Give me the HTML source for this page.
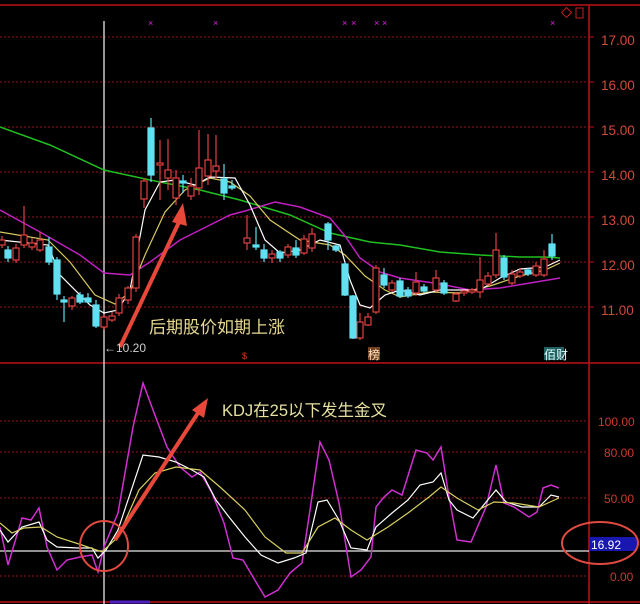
<!DOCTYPE html>
<html><head><meta charset="utf-8"><style>
html,body{margin:0;padding:0;background:#000;width:640px;height:604px;overflow:hidden}
svg{display:block}
text{font-family:"Liberation Sans","Noto Sans CJK SC",sans-serif}
</style></head><body>
<svg width="640" height="604" viewBox="0 0 640 604" xmlns="http://www.w3.org/2000/svg">
<rect width="640" height="604" fill="#000"/>
<line x1="0" y1="5" x2="640" y2="5" stroke="#c0101a" stroke-width="1.5"/>
<line x1="589" y1="5" x2="589" y2="604" stroke="#c0101a" stroke-width="1.5"/>
<line x1="0" y1="363" x2="640" y2="363" stroke="#c0101a" stroke-width="1.5"/>
<line x1="0" y1="602" x2="640" y2="602" stroke="#c0101a" stroke-width="1.5"/>
<line x1="110" y1="602" x2="150" y2="602" stroke="#5020c0" stroke-width="3"/>
<g stroke="#8a1a1a" stroke-width="1" stroke-dasharray="2,2">
<line x1="0" y1="37" x2="589" y2="37"/><line x1="0" y1="82" x2="589" y2="82"/>
<line x1="0" y1="127" x2="589" y2="127"/><line x1="0" y1="172" x2="589" y2="172"/>
<line x1="0" y1="217" x2="589" y2="217"/><line x1="0" y1="262" x2="589" y2="262"/>
<line x1="0" y1="307" x2="589" y2="307"/>
<line x1="0" y1="421" x2="589" y2="421"/><line x1="0" y1="452" x2="589" y2="452"/>
<line x1="0" y1="498" x2="589" y2="498"/><line x1="0" y1="576" x2="589" y2="576"/>
</g>
<g stroke="#c0101a"><line x1="589" y1="37" x2="594" y2="37"/><line x1="589" y1="82" x2="594" y2="82"/><line x1="589" y1="127" x2="594" y2="127"/><line x1="589" y1="172" x2="594" y2="172"/><line x1="589" y1="217" x2="594" y2="217"/><line x1="589" y1="262" x2="594" y2="262"/><line x1="589" y1="307" x2="594" y2="307"/></g>
<g fill="#d04a3a" font-size="13.5">
<text x="601" y="45">17.00</text><text x="601" y="90">16.00</text><text x="601" y="135">15.00</text>
<text x="601" y="180">14.00</text><text x="601" y="225">13.00</text><text x="601" y="270">12.00</text>
<text x="601" y="315">11.00</text>
</g>
<g fill="#c83a30" font-size="12">
<text x="598" y="426">100.00</text><text x="604" y="457">80.00</text><text x="604" y="503">50.00</text><text x="610" y="581">0.00</text>
</g>
<rect x="563" y="9" width="7" height="7" transform="rotate(45 566.5 12.5)" fill="none" stroke="#c02020"/>
<rect x="576" y="8" width="7" height="10" fill="none" stroke="#c02020"/>
<g fill="#e020e0" font-size="9"><text x="148" y="26">×</text><text x="213" y="26">×</text><text x="342" y="26">×</text><text x="351" y="26">×</text><text x="374" y="26">×</text><text x="382" y="26">×</text><text x="550" y="26">×</text></g>
<line x1="104" y1="21" x2="104" y2="604" stroke="#c8c8c8" stroke-width="1.5"/>
<polyline fill="none" stroke="#20c020" stroke-width="1.5" points="0,127 50,145 104,170 150,180 200,190 240,200 290,215 330,233 370,242 400,245 440,252 480,255 520,257 545,257 560,258"/>
<polyline fill="none" stroke="#c020c0" stroke-width="1.5" points="0,210 40,232 80,255 104,273 130,275 150,262 180,240 210,225 230,215 245,211 275,202 300,207 330,218 345,236 360,258 380,272 400,278 440,284 470,290 500,288 530,283 560,278"/>
<polyline fill="none" stroke="#d8c860" stroke-width="1.2" points="0,232 48,240 70,262 95,295 115,304 130,292 145,255 165,212 185,190 210,178 230,182 250,196 270,220 300,240 330,245 345,255 365,276 385,290 400,297 430,292 460,293 490,286 520,276 545,270 560,263"/>
<polyline fill="none" stroke="#ffffff" stroke-width="1.2" points="0,240 48,245 60,275 90,305 104,313 118,310 130,290 145,210 160,182 175,180 195,185 210,177 235,178 250,205 265,240 280,253 300,250 320,240 340,245 350,280 360,305 370,308 385,295 400,290 420,295 440,290 460,290 480,290 500,278 520,269 545,267 560,260"/>
<g stroke="#e04040" fill="#000" stroke-width="1.2">
<line x1="16" y1="244" x2="16" y2="263"/><rect x="13" y="248" width="6" height="12"/>
<line x1="24" y1="206" x2="24" y2="248"/><rect x="21" y="235" width="6" height="10"/>
<line x1="32" y1="238" x2="32" y2="250"/><rect x="29" y="243" width="6" height="4"/>
<line x1="40" y1="232" x2="40" y2="252"/><rect x="37" y="240" width="6" height="10"/>
<line x1="72" y1="296" x2="72" y2="310"/><rect x="69" y="298" width="6" height="8"/>
<line x1="104" y1="314" x2="104" y2="330"/><rect x="101" y="317" width="6" height="10"/>
<line x1="112" y1="312" x2="112" y2="322"/><rect x="109" y="316" width="6" height="4"/>
<line x1="119" y1="294" x2="119" y2="316"/><rect x="116" y="298" width="6" height="15"/>
<line x1="128" y1="286" x2="128" y2="304"/><rect x="125" y="288" width="6" height="12"/>
<line x1="136" y1="234" x2="136" y2="292"/><rect x="133" y="237" width="6" height="51"/>
<line x1="144" y1="178" x2="144" y2="208"/><rect x="141" y="181" width="6" height="18"/>
<line x1="160" y1="140" x2="160" y2="200"/><rect x="157" y="163" width="6" height="2"/>
<line x1="168" y1="139" x2="168" y2="190"/><rect x="165" y="170" width="6" height="8"/>
<line x1="176" y1="170" x2="176" y2="205"/><rect x="173" y="178" width="6" height="20"/>
<line x1="191" y1="178" x2="191" y2="200"/><rect x="188" y="186" width="6" height="10"/>
<line x1="199" y1="130" x2="199" y2="195"/><rect x="196" y="168" width="6" height="20"/>
<line x1="208" y1="134" x2="208" y2="185"/><rect x="205" y="160" width="6" height="16"/>
<line x1="216" y1="135" x2="216" y2="178"/><rect x="213" y="166" width="6" height="5"/>
<line x1="247" y1="215" x2="247" y2="250"/><rect x="244" y="238" width="6" height="5"/>
<line x1="272" y1="250" x2="272" y2="263"/><rect x="269" y="254" width="6" height="4"/>
<line x1="288" y1="244" x2="288" y2="258"/><rect x="285" y="247" width="6" height="8"/>
<line x1="304" y1="235" x2="304" y2="255"/><rect x="301" y="239" width="6" height="14"/>
<line x1="312" y1="228" x2="312" y2="252"/><rect x="309" y="234" width="6" height="14"/>
<line x1="360" y1="313" x2="360" y2="340"/><rect x="357" y="322" width="6" height="16"/>
<line x1="368" y1="313" x2="368" y2="326"/><rect x="365" y="317" width="6" height="8"/>
<line x1="376" y1="265" x2="376" y2="314"/><rect x="373" y="268" width="6" height="44"/>
<line x1="392" y1="280" x2="392" y2="292"/><rect x="389" y="283" width="6" height="7"/>
<line x1="416" y1="272" x2="416" y2="296"/><rect x="413" y="282" width="6" height="11"/>
<line x1="436" y1="270" x2="436" y2="292"/><rect x="433" y="278" width="6" height="12"/>
<line x1="456" y1="292" x2="456" y2="302"/><rect x="453" y="294" width="6" height="7"/>
<line x1="464" y1="290" x2="464" y2="296"/><rect x="461" y="291" width="6" height="2"/>
<line x1="472" y1="288" x2="472" y2="294"/><rect x="469" y="290" width="6" height="2"/>
<line x1="480" y1="257" x2="480" y2="298"/><rect x="477" y="280" width="6" height="12"/>
<line x1="488" y1="272" x2="488" y2="286"/><rect x="485" y="276" width="6" height="8"/>
<line x1="496" y1="233" x2="496" y2="278"/><rect x="493" y="250" width="6" height="25"/>
<line x1="512" y1="270" x2="512" y2="285"/><rect x="509" y="274" width="6" height="9"/>
<line x1="520" y1="268" x2="520" y2="278"/><rect x="517" y="272" width="6" height="4"/>
<line x1="536" y1="262" x2="536" y2="277"/><rect x="533" y="266" width="6" height="9"/>
<line x1="544" y1="250" x2="544" y2="277"/><rect x="541" y="259" width="6" height="16"/>
<line x1="2" y1="236" x2="2" y2="248"/><rect x="-1" y="240" width="6" height="5"/>
</g>
<g stroke="#60e0f0" fill="#60e0f0" stroke-width="1.2">
<line x1="8" y1="246" x2="8" y2="262"/><rect x="5" y="250" width="6" height="8"/>
<line x1="49" y1="237" x2="49" y2="265"/><rect x="46" y="247" width="6" height="15"/>
<line x1="57" y1="257" x2="57" y2="300"/><rect x="54" y="260" width="6" height="34"/>
<line x1="64" y1="296" x2="64" y2="322"/><rect x="61" y="300" width="6" height="2"/>
<line x1="80" y1="292" x2="80" y2="304"/><rect x="77" y="295" width="6" height="7"/>
<line x1="88" y1="293" x2="88" y2="303"/><rect x="85" y="298" width="6" height="4"/>
<line x1="96" y1="300" x2="96" y2="328"/><rect x="93" y="305" width="6" height="21"/>
<line x1="151" y1="118" x2="151" y2="182"/><rect x="148" y="128" width="6" height="47"/>
<line x1="183" y1="175" x2="183" y2="193"/><rect x="180" y="181" width="6" height="2"/>
<line x1="224" y1="164" x2="224" y2="200"/><rect x="221" y="179" width="6" height="14"/>
<line x1="232" y1="180" x2="232" y2="190"/><rect x="229" y="186" width="6" height="2"/>
<line x1="256" y1="227" x2="256" y2="250"/><rect x="253" y="245" width="6" height="2"/>
<line x1="264" y1="244" x2="264" y2="262"/><rect x="261" y="250" width="6" height="8"/>
<line x1="280" y1="250" x2="280" y2="262"/><rect x="277" y="252" width="6" height="6"/>
<line x1="296" y1="240" x2="296" y2="258"/><rect x="293" y="248" width="6" height="7"/>
<line x1="328" y1="222" x2="328" y2="250"/><rect x="325" y="224" width="6" height="16"/>
<line x1="336" y1="244" x2="336" y2="252"/><rect x="333" y="246" width="6" height="4"/>
<line x1="345" y1="262" x2="345" y2="296"/><rect x="342" y="264" width="6" height="31"/>
<line x1="353" y1="295" x2="353" y2="339"/><rect x="350" y="296" width="6" height="42"/>
<line x1="384" y1="268" x2="384" y2="288"/><rect x="381" y="275" width="6" height="10"/>
<line x1="400" y1="278" x2="400" y2="298"/><rect x="397" y="281" width="6" height="15"/>
<line x1="408" y1="287" x2="408" y2="298"/><rect x="405" y="290" width="6" height="6"/>
<line x1="424" y1="284" x2="424" y2="293"/><rect x="421" y="287" width="6" height="4"/>
<line x1="444" y1="280" x2="444" y2="295"/><rect x="441" y="283" width="6" height="10"/>
<line x1="504" y1="255" x2="504" y2="280"/><rect x="501" y="258" width="6" height="19"/>
<line x1="528" y1="268" x2="528" y2="276"/><rect x="525" y="270" width="6" height="4"/>
<line x1="552" y1="234" x2="552" y2="260"/><rect x="549" y="244" width="6" height="12"/>
</g>
<line x1="120" y1="347" x2="180" y2="220" stroke="#e8483a" stroke-width="4"/>
<polygon points="183,203 172,222 187,226" fill="#e8483a"/>
<text x="149" y="333" font-size="17" fill="#e6d890">后期股价如期上涨</text>
<text x="104" y="352" font-size="12" fill="#d0d0d0">←10.20</text>
<text x="242" y="359" font-size="9" fill="#e03020">$</text>
<rect x="368" y="347" width="12" height="13" fill="#704020"/>
<text x="368" y="359" font-size="12" fill="#ffe0c0">榜</text>
<rect x="544" y="347" width="20" height="13" fill="#206060"/>
<text x="544" y="359" font-size="12" fill="#e0ffff">佰财</text>
<line x1="0" y1="551" x2="589" y2="551" stroke="#e8e8e8" stroke-width="1.2"/>
<polyline fill="none" stroke="#d030d0" stroke-width="1.5" points="0,527 8,565 22,518 31,520 39,508 47,547 57,570 67,560 80,557 92,555 98,572 104,547 118,513 133,427 143,383 153,410 167,447 180,467 192,477 200,472 212,493 224,523 233,558 243,560 253,577 265,597 278,590 290,573 302,563 310,510 320,442 329,460 339,503 351,577 361,570 371,557 376,507 384,497 392,490 402,495 416,450 427,453 433,460 441,447 449,497 457,540 471,542 486,507 496,465 504,503 514,507 529,517 537,512 543,488 551,485 559,488"/>
<polyline fill="none" stroke="#ffffff" stroke-width="1.2" points="0,530 8,542 22,527 39,522 47,540 57,547 78,548 92,548 98,558 106,550 118,530 143,455 159,457 176,462 192,470 204,477 216,500 229,517 245,537 261,555 278,563 294,558 306,553 318,502 327,500 339,520 351,548 367,550 376,527 392,513 408,500 420,485 433,482 441,473 449,500 457,510 473,518 496,490 506,502 522,507 539,507 551,495 559,497"/>
<polyline fill="none" stroke="#d8d060" stroke-width="1.2" points="0,523 12,533 24,528 41,527 57,537 82,545 102,552 118,537 139,490 155,473 176,467 200,470 220,487 245,510 265,537 286,553 302,553 318,527 335,518 351,530 367,540 388,527 408,513 429,497 441,487 457,498 478,510 494,502 514,503 539,507 559,498"/>
<line x1="115" y1="540" x2="198" y2="413" stroke="#e8483a" stroke-width="4"/>
<polygon points="208,398 192,410 204,418" fill="#e8483a"/>
<text x="222" y="416" font-size="16.5" fill="#e6e0a0">KDJ在25以下发生金叉</text>
<ellipse cx="104" cy="546" rx="24" ry="25" fill="none" stroke="#e04a40" stroke-width="2"/>
<rect x="590" y="537" width="47" height="14" fill="#1818b0"/>
<text x="591" y="549" font-size="12" fill="#ffffff">16.92</text>
<ellipse cx="600" cy="543" rx="38" ry="21" fill="none" stroke="#e04a40" stroke-width="2"/>
</svg>
</body></html>
